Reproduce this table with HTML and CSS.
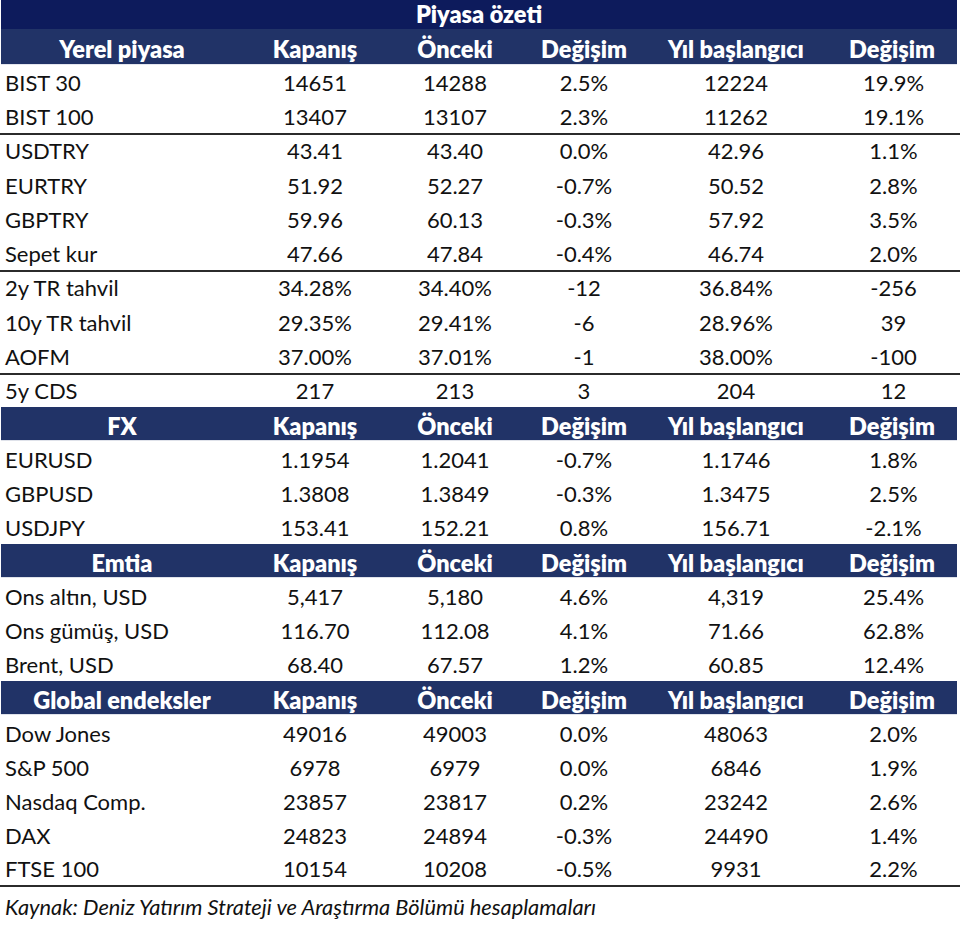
FILE: index.html
```html
<!DOCTYPE html>
<html lang="tr">
<head>
<meta charset="utf-8">
<title>Piyasa özeti</title>
<link rel="stylesheet" href="styles.css">
</head>
<body>
<div class="sheet">
  <div class="title">Piyasa özeti</div>

  <div class="row hdr first-hdr"><div>Yerel piyasa</div><div>Kapanış</div><div>Önceki</div><div>Değişim</div><div>Yıl başlangıcı</div><div>Değişim</div></div>
  <div class="row"><div>BIST 30</div><div>14651</div><div>14288</div><div>2.5%</div><div>12224</div><div>19.9%</div></div>
  <div class="row"><div>BIST 100</div><div>13407</div><div>13107</div><div>2.3%</div><div>11262</div><div>19.1%</div></div>
  <div class="row sep"><div>USDTRY</div><div>43.41</div><div>43.40</div><div>0.0%</div><div>42.96</div><div>1.1%</div></div>
  <div class="row"><div>EURTRY</div><div>51.92</div><div>52.27</div><div>-0.7%</div><div>50.52</div><div>2.8%</div></div>
  <div class="row"><div>GBPTRY</div><div>59.96</div><div>60.13</div><div>-0.3%</div><div>57.92</div><div>3.5%</div></div>
  <div class="row"><div>Sepet kur</div><div>47.66</div><div>47.84</div><div>-0.4%</div><div>46.74</div><div>2.0%</div></div>
  <div class="row sep"><div>2y TR tahvil</div><div>34.28%</div><div>34.40%</div><div>-12</div><div>36.84%</div><div>-256</div></div>
  <div class="row"><div>10y TR tahvil</div><div>29.35%</div><div>29.41%</div><div>-6</div><div>28.96%</div><div>39</div></div>
  <div class="row"><div>AOFM</div><div>37.00%</div><div>37.01%</div><div>-1</div><div>38.00%</div><div>-100</div></div>
  <div class="row sep"><div>5y CDS</div><div>217</div><div>213</div><div>3</div><div>204</div><div>12</div></div>

  <div class="row hdr"><div>FX</div><div>Kapanış</div><div>Önceki</div><div>Değişim</div><div>Yıl başlangıcı</div><div>Değişim</div></div>
  <div class="row"><div>EURUSD</div><div>1.1954</div><div>1.2041</div><div>-0.7%</div><div>1.1746</div><div>1.8%</div></div>
  <div class="row"><div>GBPUSD</div><div>1.3808</div><div>1.3849</div><div>-0.3%</div><div>1.3475</div><div>2.5%</div></div>
  <div class="row"><div>USDJPY</div><div>153.41</div><div>152.21</div><div>0.8%</div><div>156.71</div><div>-2.1%</div></div>

  <div class="row hdr"><div>Emtia</div><div>Kapanış</div><div>Önceki</div><div>Değişim</div><div>Yıl başlangıcı</div><div>Değişim</div></div>
  <div class="row"><div>Ons altın, USD</div><div>5,417</div><div>5,180</div><div>4.6%</div><div>4,319</div><div>25.4%</div></div>
  <div class="row"><div>Ons gümüş, USD</div><div>116.70</div><div>112.08</div><div>4.1%</div><div>71.66</div><div>62.8%</div></div>
  <div class="row"><div>Brent, USD</div><div>68.40</div><div>67.57</div><div>1.2%</div><div>60.85</div><div>12.4%</div></div>

  <div class="row hdr"><div>Global endeksler</div><div>Kapanış</div><div>Önceki</div><div>Değişim</div><div>Yıl başlangıcı</div><div>Değişim</div></div>
  <div class="row"><div>Dow Jones</div><div>49016</div><div>49003</div><div>0.0%</div><div>48063</div><div>2.0%</div></div>
  <div class="row"><div>S&amp;P 500</div><div>6978</div><div>6979</div><div>0.0%</div><div>6846</div><div>1.9%</div></div>
  <div class="row"><div>Nasdaq Comp.</div><div>23857</div><div>23817</div><div>0.2%</div><div>23242</div><div>2.6%</div></div>
  <div class="row"><div>DAX</div><div>24823</div><div>24894</div><div>-0.3%</div><div>24490</div><div>1.4%</div></div>
  <div class="row last"><div>FTSE 100</div><div>10154</div><div>10208</div><div>-0.5%</div><div>9931</div><div>2.2%</div></div>

  <div class="note">Kaynak: Deniz Yatırım Strateji ve Araştırma Bölümü hesaplamaları</div>
</div>
</body>
</html>
```

FILE: styles.css
```css
* { box-sizing: border-box; }
html, body { margin: 0; padding: 0; background: #ffffff; }
body {
  font-family: "Lato", "Open Sans", sans-serif;
  color: #111111;
  width: 960px;
  height: 928px;
  overflow: hidden;
}
.sheet { width: 960px; }
.title {
  height: 29px;
  margin: 0 3px 0 1px;
  background: #0d1b5c;
  color: #ffffff;
  font-weight: 800;
  font-size: 23.5px;
  line-height: 28px;
  text-align: center;
  padding-top: 0;
}
.row {
  display: grid;
  grid-template-columns: 243px 144px 136px 122px 182px 133px;
  height: 34.25px;
  align-items: end;
  font-size: 22px;
  line-height: 26px;
  padding-bottom: 3px;
}
.row > div { text-align: center; white-space: nowrap; }
.row > div:first-child { text-align: left; padding-left: 5px; }
.row.sep { border-top: 2px solid #2b2b2b; }
.row.last { border-bottom: 2px solid #2b2b2b; }
.hdr {
  background: #213367;
  color: #ffffff;
  font-weight: 800;
  font-size: 23.5px;
  margin: 0 3px 0 1px;
  grid-template-columns: 242px 144px 136px 122px 182px 130px;
  padding-bottom: 1px;
  border-bottom: 1px solid #dfe2ea;
}
.hdr > div:first-child { text-align: center; padding-left: 0; }
.first-hdr { height: 35.5px; border-bottom: 1.5px solid #e4e6ee; padding-bottom: 2px; }
.note {
  font-style: italic;
  font-size: 21.8px;
  line-height: 26px;
  padding: 7px 0 0 5px;
  color: #111111;
}
```
